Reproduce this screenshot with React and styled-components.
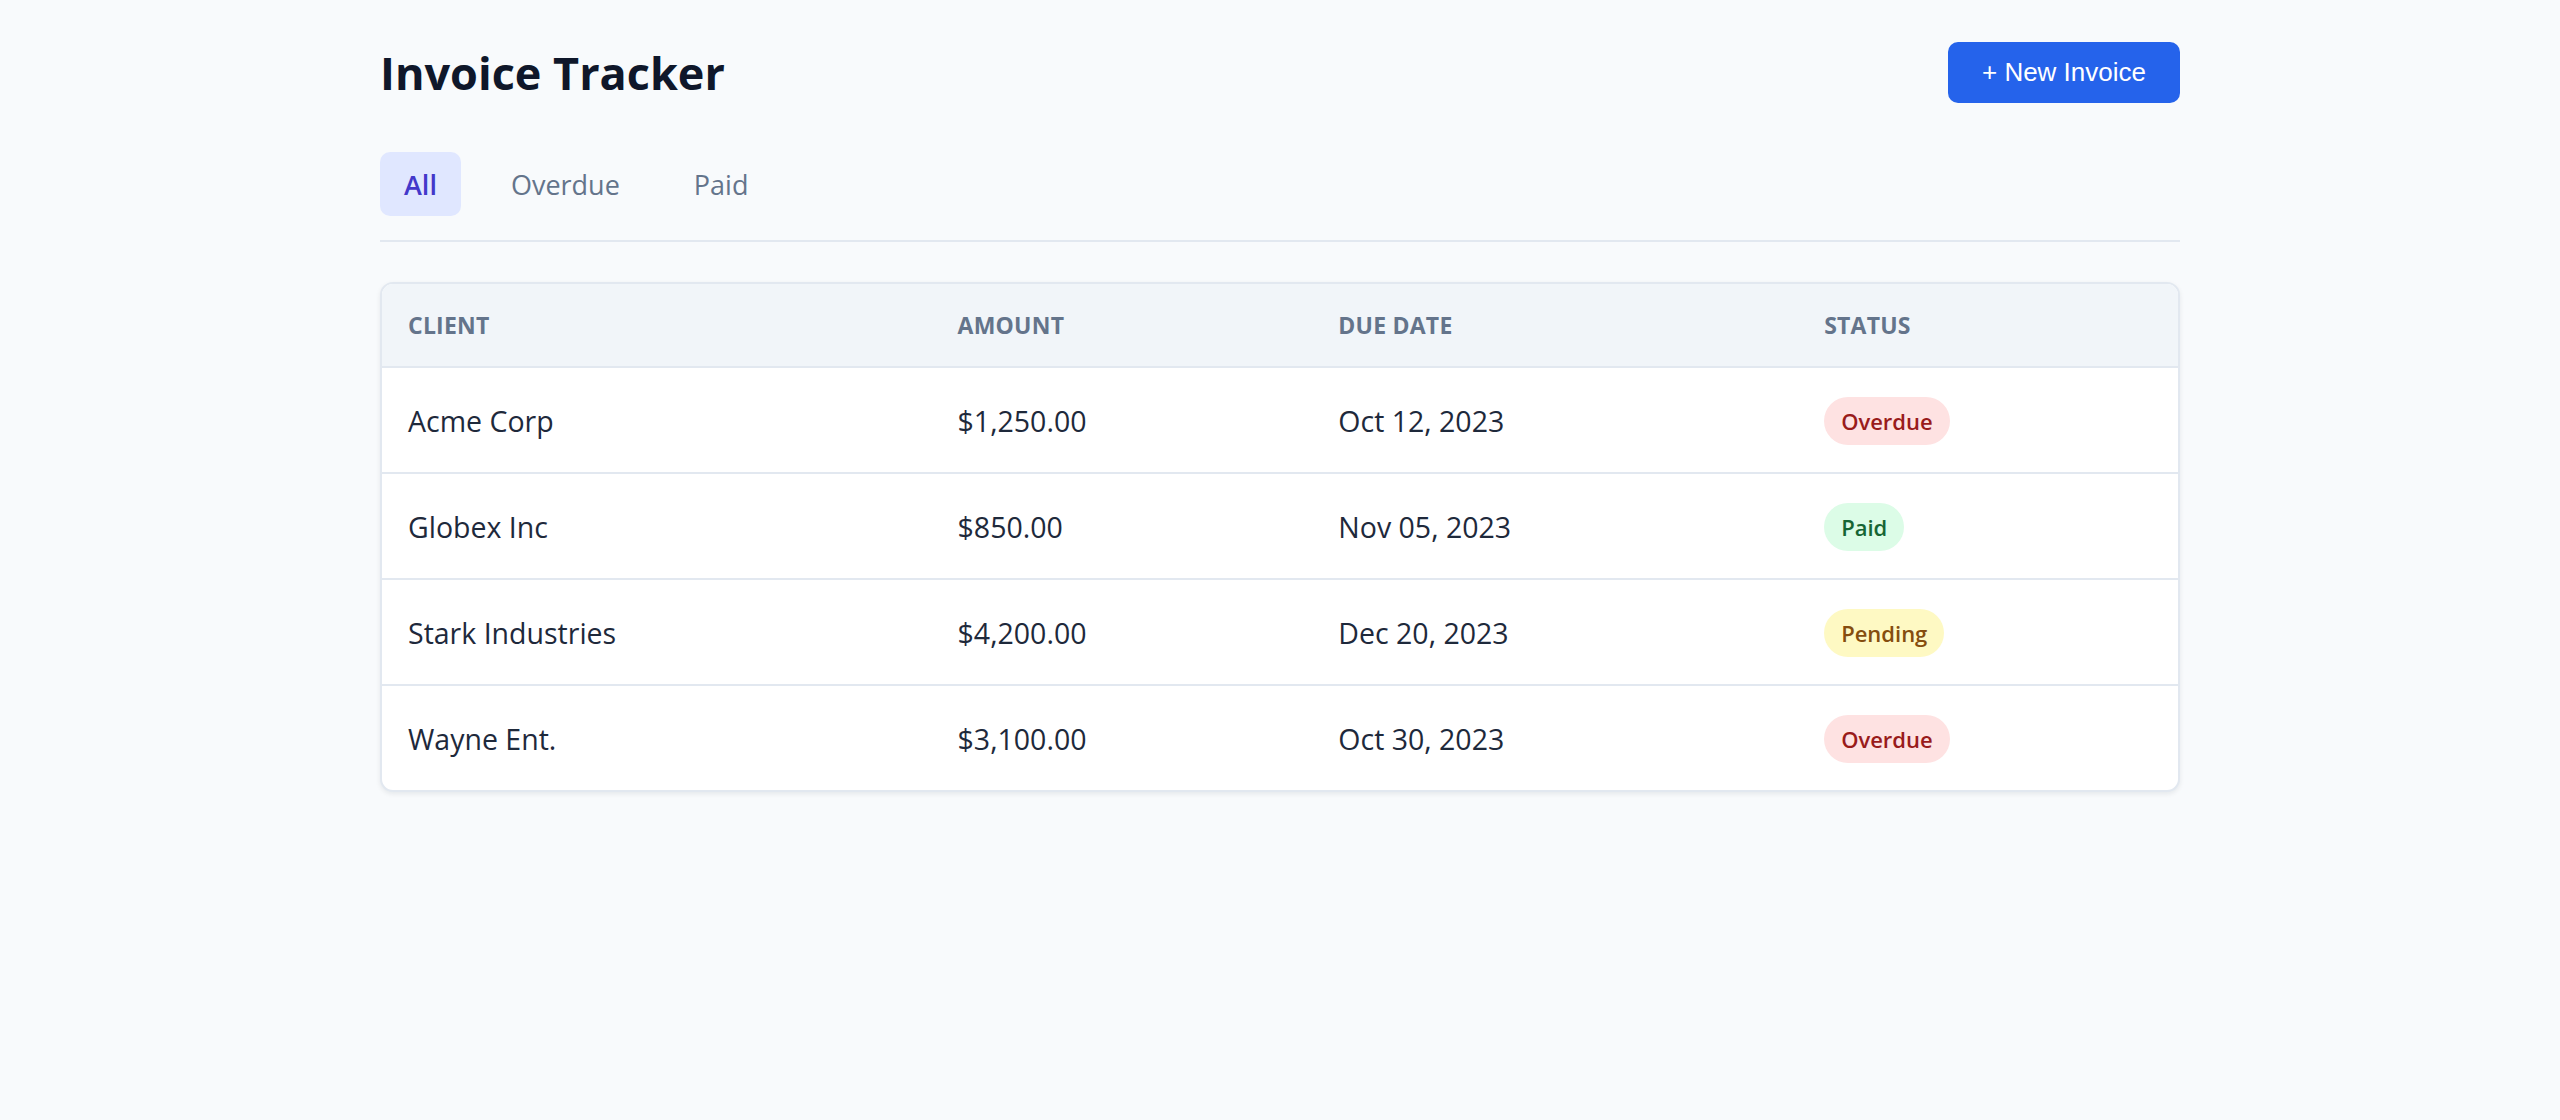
import React from "react";
import styled, { createGlobalStyle } from "styled-components";

const GlobalStyle = createGlobalStyle`
  body {
    margin: 0;
    background: #f8fafc;
    font-family: "Open Sans", "Noto Sans", sans-serif;
    color: #1e293b;
  }
`;

const Page = styled.div`
  max-width: 1800px;
  margin: 0 auto;
  padding: 42px 0 80px;
`;

const Header = styled.header`
  display: flex;
  align-items: center;
  justify-content: space-between;
`;

const Title = styled.h1`
  margin: 0;
  font-size: 45px;
  line-height: 1.2;
  font-weight: 700;
  color: #0f172a;
`;

const NewButton = styled.button`
  font-family: "Liberation Sans", Arial, sans-serif;
  font-size: 26px;
  line-height: 30px;
  padding: 15px 34px 16px;
  color: #ffffff;
  background: #2563eb;
  border: none;
  border-radius: 10px;
  cursor: pointer;
`;

const Tabs = styled.nav`
  display: flex;
  gap: 26px;
  margin-top: 49px;
  padding-bottom: 24px;
  border-bottom: 2px solid #e2e8f0;
`;

const Tab = styled.button`
  font-family: inherit;
  font-size: 27px;
  line-height: 40px;
  padding: 13px 24px 11px;
  border: none;
  border-radius: 10px;
  cursor: pointer;
  background: ${(p) => (p.$active ? "#e0e7ff" : "transparent")};
  color: ${(p) => (p.$active ? "#4338ca" : "#64748b")};
  font-weight: ${(p) => (p.$active ? 600 : 400)};
`;

const Card = styled.div`
  margin-top: 40px;
  background: #ffffff;
  border: 2px solid #e2e8f0;
  border-radius: 13px;
  box-shadow: 0 2px 5px rgba(15, 23, 42, 0.08);
  overflow: hidden;
`;

const Table = styled.table`
  width: 100%;
  border-collapse: collapse;
  table-layout: fixed;
`;

const Th = styled.th`
  text-align: left;
  padding: 23px 26px;
  font-size: 23px;
  line-height: 36px;
  font-weight: 700;
  text-transform: uppercase;
  letter-spacing: 0.01em;
  color: #64748b;
  background: #f1f5f9;
  border-bottom: 2px solid #e2e8f0;
`;

const Td = styled.td`
  padding: 29px 26px 27px;
  font-size: 28.5px;
  line-height: 48px;
  color: #1e293b;
`;

const Row = styled.tr`
  & + & td {
    border-top: 2px solid #e2e8f0;
  }
`;

const badgeColors = {
  Overdue: { bg: "#fee2e2", fg: "#991b1b" },
  Paid: { bg: "#dcfce7", fg: "#166534" },
  Pending: { bg: "#fef9c3", fg: "#854d0e" },
};

const Badge = styled.span`
  display: inline-block;
  padding: 7px 17px;
  font-size: 22px;
  line-height: 34px;
  font-weight: 600;
  border-radius: 999px;
  vertical-align: top;
  background: ${(p) => badgeColors[p.$status].bg};
  color: ${(p) => badgeColors[p.$status].fg};
`;

const invoices = [
  { client: "Acme Corp", amount: "$1,250.00", due: "Oct 12, 2023", status: "Overdue" },
  { client: "Globex Inc", amount: "$850.00", due: "Nov 05, 2023", status: "Paid" },
  { client: "Stark Industries", amount: "$4,200.00", due: "Dec 20, 2023", status: "Pending" },
  { client: "Wayne Ent.", amount: "$3,100.00", due: "Oct 30, 2023", status: "Overdue" },
];

const App = () => {
  return (
    <>
      <GlobalStyle />
      <Page>
        <Header>
          <Title>Invoice Tracker</Title>
          <NewButton>+ New Invoice</NewButton>
        </Header>
        <Tabs>
          <Tab $active>All</Tab>
          <Tab>Overdue</Tab>
          <Tab>Paid</Tab>
        </Tabs>
        <Card>
          <Table>
            <colgroup>
              <col style={{ width: "30.6%" }} />
              <col style={{ width: "21.2%" }} />
              <col style={{ width: "27.05%" }} />
              <col />
            </colgroup>
            <thead>
              <tr>
                <Th>Client</Th>
                <Th>Amount</Th>
                <Th>Due Date</Th>
                <Th>Status</Th>
              </tr>
            </thead>
            <tbody>
              {invoices.map((inv) => (
                <Row key={inv.client}>
                  <Td>{inv.client}</Td>
                  <Td>{inv.amount}</Td>
                  <Td>{inv.due}</Td>
                  <Td>
                    <Badge $status={inv.status}>{inv.status}</Badge>
                  </Td>
                </Row>
              ))}
            </tbody>
          </Table>
        </Card>
      </Page>
    </>
  );
};

export default App;
